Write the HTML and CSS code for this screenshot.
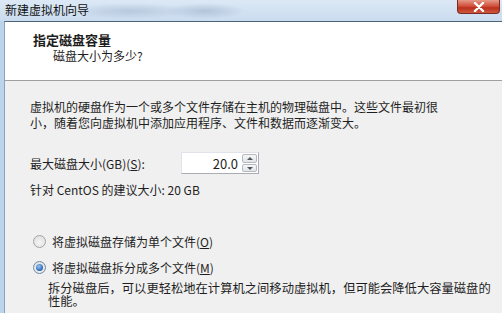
FILE: index.html
```html
<!DOCTYPE html>
<html lang="zh-CN">
<head>
    <meta charset="UTF-8">
    <title>新建虚拟机向导</title>
    <link rel="stylesheet" href="styles.css">
</head>
<body>
    <div class="window">
        <div class="titlebar">
            <span class="title">新建虚拟机向导</span>
            <div class="close">
                <svg width="14" height="10" viewBox="0 0 14 10">
                    <path d="M3 1 L11 9 M11 1 L3 9" stroke="#fff" stroke-width="2.4" stroke-linecap="round"/>
                </svg>
            </div>
        </div>

        <div class="client">
            <div class="header">
                <div class="header-title">指定磁盘容量</div>
                <div class="header-sub">磁盘大小为多少?</div>
            </div>

            <div class="content">
                <p class="intro">虚拟机的硬盘作为一个或多个文件存储在主机的物理磁盘中。这些文件最初很小，随着您向虚拟机中添加应用程序、文件和数据而逐渐变大。</p>

                <div class="size-row">
                    <label class="size-label">最大磁盘大小(GB)(<u>S</u>):</label>
                    <div class="spinner">
                        <span class="spinner-value">20.0</span>
                        <div class="spin-buttons">
                            <div class="spin up"></div>
                            <div class="spin down"></div>
                        </div>
                    </div>
                </div>
                <div class="hint">针对 CentOS 的建议大小: 20 GB</div>

                <div class="options">
                    <div class="option">
                        <span class="radio"></span>
                        <span>将虚拟磁盘存储为单个文件(<u>O</u>)</span>
                    </div>
                    <div class="option">
                        <span class="radio checked"></span>
                        <span>将虚拟磁盘拆分成多个文件(<u>M</u>)</span>
                    </div>
                    <p class="option-desc">拆分磁盘后，可以更轻松地在计算机之间移动虚拟机，但可能会降低大容量磁盘的性能。</p>
                </div>
            </div>
        </div>
    </div>
</body>
</html>
```

FILE: styles.css
```css
* {
    box-sizing: border-box;
}

body {
    margin: 0;
    font-family: "Noto Sans CJK SC", "Noto Sans", sans-serif;
    font-size: 12px;
    color: #1e1e1e;
    background-color: #c9dcf0;
}

.window {
    width: 502px;
    height: 313px;
    display: flex;
    flex-direction: column;
    overflow: hidden;
    background: linear-gradient(to right, #bcd3ec, #d4e3f3 40%, #cfe0f2);
}

.titlebar {
    height: 21px;
    display: flex;
    justify-content: space-between;
    align-items: flex-start;
    padding-left: 5px;
    background:
        radial-gradient(ellipse 60px 8px at 130px 11px, rgba(150, 170, 195, 0.45), transparent),
        radial-gradient(ellipse 40px 8px at 205px 11px, rgba(140, 160, 190, 0.45), transparent),
        linear-gradient(to bottom, #dce8f5, #cadcef);
}

.title {
    line-height: 20px;
    font-size: 12px;
    color: #111;
}

.close {
    width: 43px;
    height: 14px;
    margin-right: 2px;
    display: flex;
    align-items: center;
    justify-content: center;
    border: 1px solid #7a2a24;
    border-top: none;
    border-radius: 0 0 4px 4px;
    background: linear-gradient(to bottom, #e69a8a, #cf4a35 50%, #b8301c 60%, #d0573f);
}

.client {
    flex: 1;
    margin-left: 4px;
    border-top: 1px solid #4e6276;
    border-left: 1px solid #8da2b8;
    background-color: #f0f0f0;
}

.header {
    height: 59px;
    background-color: #fff;
    border-bottom: 1px solid #a0a0a0;
    padding: 9px 0 0 28px;
}

.header-title {
    font-weight: bold;
    font-size: 13px;
    line-height: 18px;
}

.header-sub {
    padding-left: 20px;
    line-height: 14px;
}

.content {
    padding: 18px 0 0 25px;
}

.intro {
    margin: 0;
    width: 414px;
    line-height: 16px;
}

.size-row {
    display: flex;
    align-items: center;
    margin-top: 21px;
}

.size-label {
    width: 151px;
}

.spinner {
    width: 78px;
    height: 22px;
    display: flex;
    align-items: center;
    justify-content: flex-end;
    background-color: #fff;
    border: 1px solid #abadb3;
    border-top-color: #e2e3ea;
    border-left-color: #e2e3ea;
    padding: 1px;
}

.spinner-value {
    margin-right: 4px;
    font-size: 13px;
}

.spin-buttons {
    display: flex;
    flex-direction: column;
    gap: 1px;
    height: 100%;
}

.spin {
    width: 15px;
    flex: 1;
    position: relative;
    border: 1px solid #b4b9c2;
    border-radius: 2px;
    background: linear-gradient(to bottom, #f6f6f6, #e2e4e8);
}

.spin::before {
    content: '';
    position: absolute;
    left: 4px;
    top: 2px;
    border-left: 3px solid transparent;
    border-right: 3px solid transparent;
}

.spin.up::before {
    border-bottom: 3px solid #4d5560;
}

.spin.down::before {
    border-top: 3px solid #4d5560;
}

.hint {
    margin-top: 8px;
    line-height: 16px;
}

.options {
    margin-top: 35px;
}

.option {
    display: flex;
    align-items: center;
    gap: 6px;
    height: 16px;
    margin-bottom: 10px;
}

.radio {
    width: 13px;
    height: 13px;
    margin-left: 3px;
    border-radius: 50%;
    border: 1px solid #a2a4a6;
    background: radial-gradient(circle at 50% 60%, #f4f4f4, #dcdcdc);
    position: relative;
}

.radio.checked {
    border-color: #6f8aab;
}

.radio.checked::after {
    content: '';
    position: absolute;
    left: 2px;
    top: 2px;
    width: 7px;
    height: 7px;
    border-radius: 50%;
    background: radial-gradient(circle at 40% 35%, #9cc6f2, #2a65b4 70%, #1c4d93);
}

.option-desc {
    margin: -3px 0 0 18px;
    width: 450px;
    font-size: 12.3px;
    line-height: 13px;
}
```
